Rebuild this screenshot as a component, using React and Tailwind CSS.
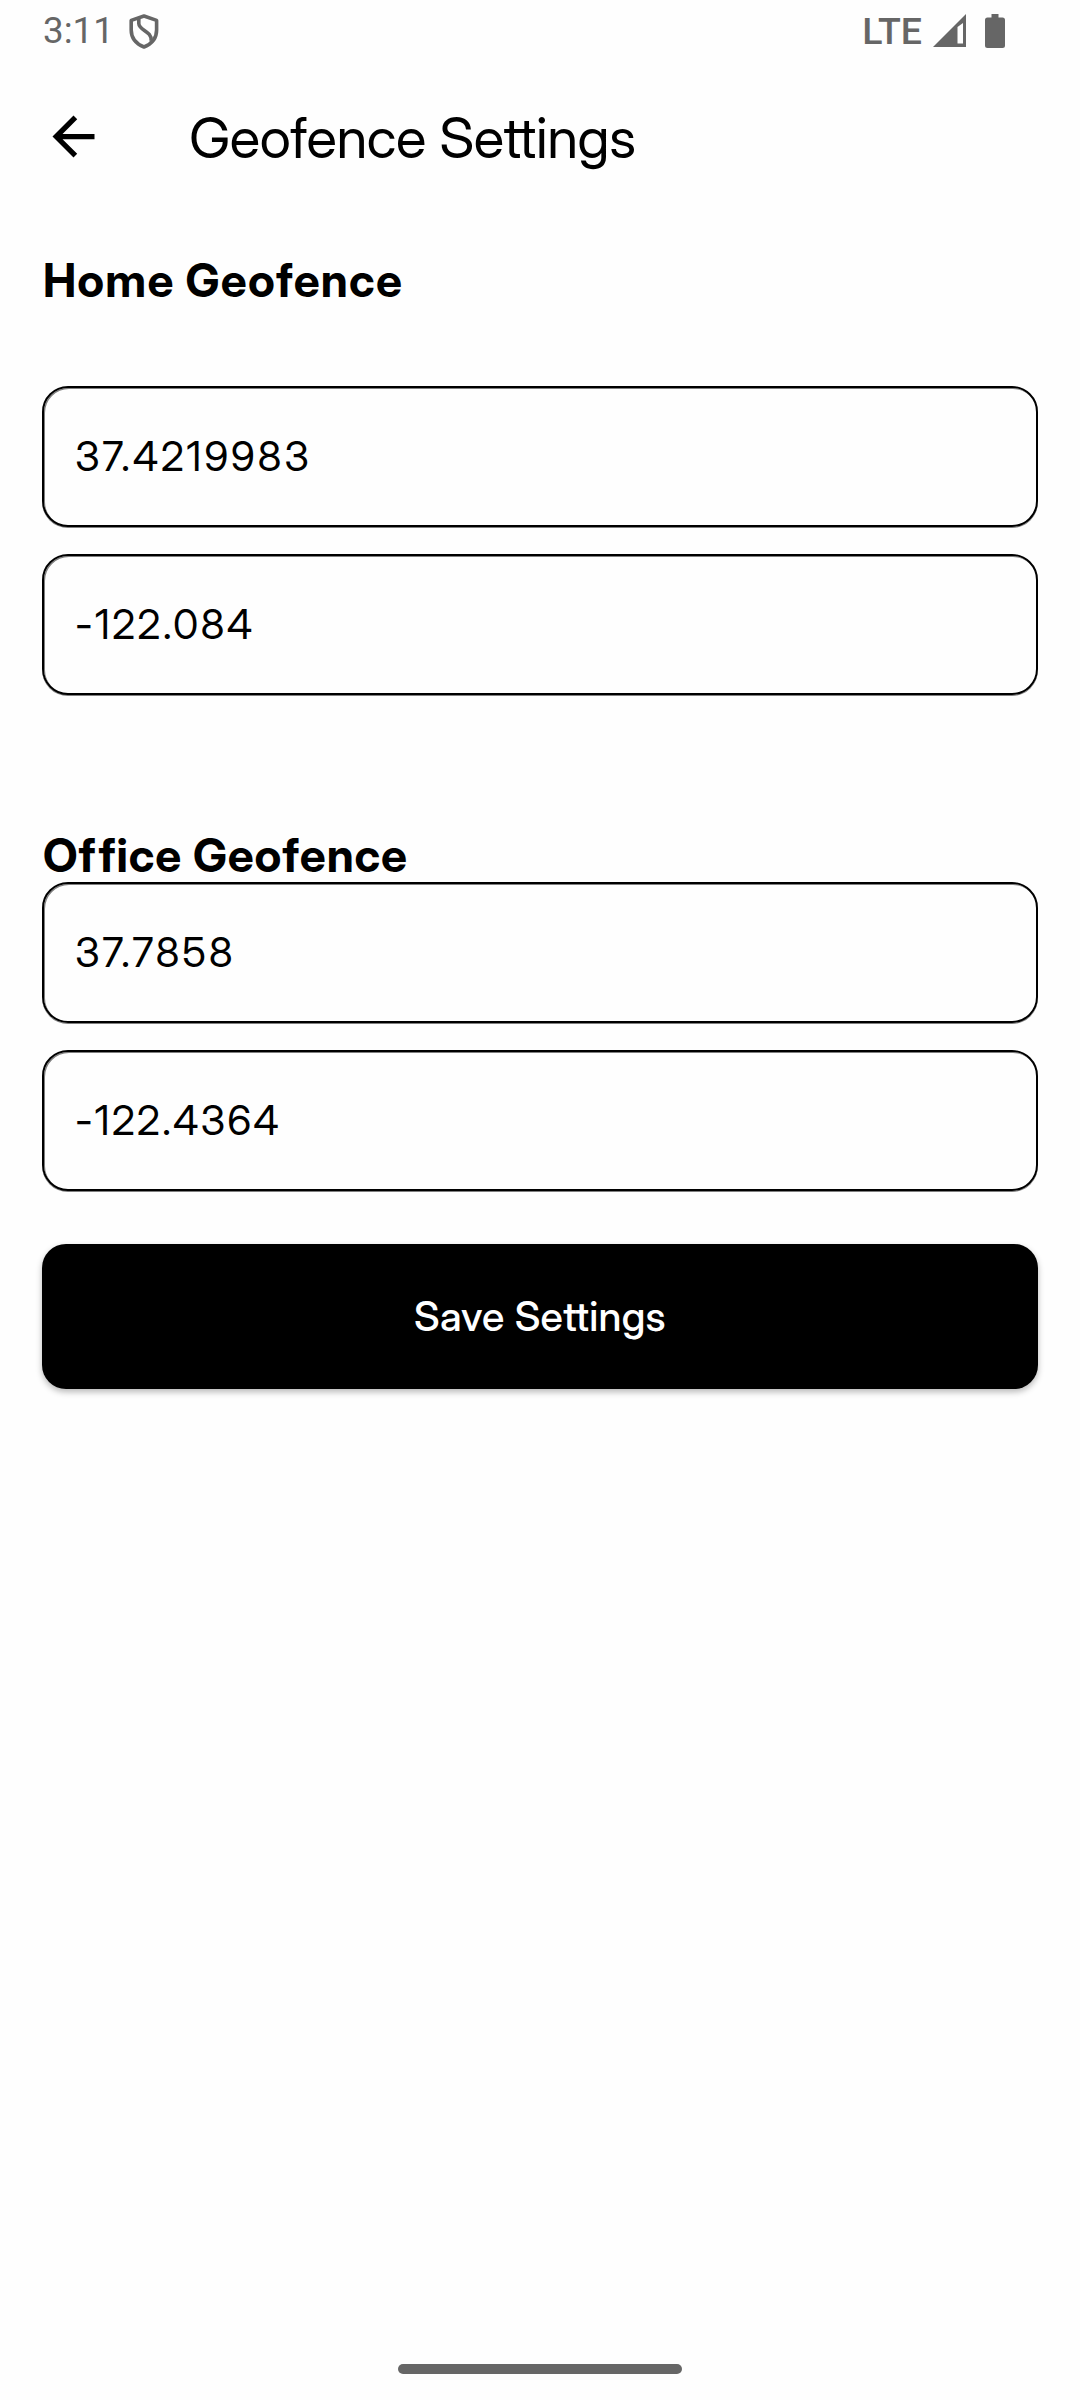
import React from "react";

function StatusBar() {
  return (
    <div className="flex h-[62px] items-start justify-between pr-[75px] pl-[43px] text-[#666666]">
      <div className="flex items-start">
        <span className="mt-[9px] w-[86px] font-[Roboto] text-[36.75px] leading-[43px]">3:11</span>
        <svg className="mt-[13px] h-[37px] w-[30px]" viewBox="0 0 30 37" fill="none" stroke="currentColor" strokeWidth="3.6">
          <path d="M15 3 L27.6 7.4 V17 C27.6 25 22.5 31 15 34 C7.5 31 2.2 25 2.2 17 V7.4 Z" strokeLinejoin="round" />
          <path d="M9.8 5 V10.5 C10 17.5 23 18 22.2 27.8" />
        </svg>
      </div>
      <div className="flex items-start">
        <span className="mt-[9px] mr-[11px] font-[Roboto] text-[37.5px] leading-[44px] font-medium">LTE</span>
        <svg className="mt-[14px] h-[33px] w-[33px]" viewBox="0 0 33 33" fill="currentColor">
          <path fillRule="evenodd" d="M33 0 V33 H0 Z M30 9 L24.5 13 V29.5 H30 Z" />
        </svg>
        <svg className="mt-[14px] ml-[19px] h-[34px] w-5" viewBox="0 0 20 34" fill="currentColor">
          <path d="M6.5 0 H13.5 V3.5 H17.5 Q20 3.5 20 6 V31.5 Q20 34 17.5 34 H2.5 Q0 34 0 31.5 V6 Q0 3.5 2.5 3.5 H6.5 Z" />
        </svg>
      </div>
    </div>
  );
}

function Field({ label, value, className }) {
  return (
    <input
      aria-label={label}
      defaultValue={value}
      className={
        "block h-[141px] w-full rounded-[26px] border-2 border-black bg-transparent px-[31px] pb-px text-[41.25px] text-black shadow-[inset_1px_1px_0_rgba(0,0,0,0.5),0_1px_0_rgba(0,0,0,0.5)] outline-none " +
        className
      }
    />
  );
}

export default function App() {
  return (
    <div className="flex h-[2400px] w-[1080px] flex-col bg-[#fefefe] font-['Inter_Display',Inter,sans-serif] text-black">
      <StatusBar />
      <header className="flex h-[149px] items-center px-[42px]">
        <svg className="h-[63px] w-[63px]" viewBox="0 0 24 24" fill="currentColor">
          <path d="M20 11H7.83l5.59-5.59L12 4l-8 8 8 8 1.41-1.41L7.83 13H20v-2z" />
        </svg>
        <h1 className="mt-[2px] ml-[84px] text-[56.5px] leading-[69px] tracking-[-0.44px]">Geofence Settings</h1>
      </header>
      <main className="flex flex-col px-[42px]">
        <h2 className="mt-[42px] pl-px text-[46.25px] leading-[55px] font-bold tracking-[1.15px]">Home Geofence</h2>
        <div className="mt-[78px] flex flex-col gap-[27px]">
          <Field label="Home latitude" value="37.4219983" className="tracking-[2.62px]" />
          <Field label="Home longitude" value="-122.084" className="tracking-[2.2px]" />
        </div>
        <h2 className="mt-[133px] h-[54px] pl-px text-[46.25px] leading-[55px] font-bold tracking-[0.85px]">
          O<span className="tracking-[3px]">f</span>fice Geofence
        </h2>
        <div className="flex flex-col gap-[27px]">
          <Field label="Office latitude" value="37.7858" className="tracking-[2.65px]" />
          <Field label="Office longitude" value="-122.4364" className="tracking-[2px]" />
        </div>
        <button className="mt-[53px] h-[145px] w-full rounded-[24px] bg-black text-[41px] font-medium tracking-[0.26px] text-white shadow-[0_3px_6px_rgba(0,0,0,0.28)]">
          Save Settings
        </button>
      </main>
      <div className="mt-auto mb-[26px] h-[10px] w-[284px] self-center rounded-full bg-[#666666]" />
    </div>
  );
}
